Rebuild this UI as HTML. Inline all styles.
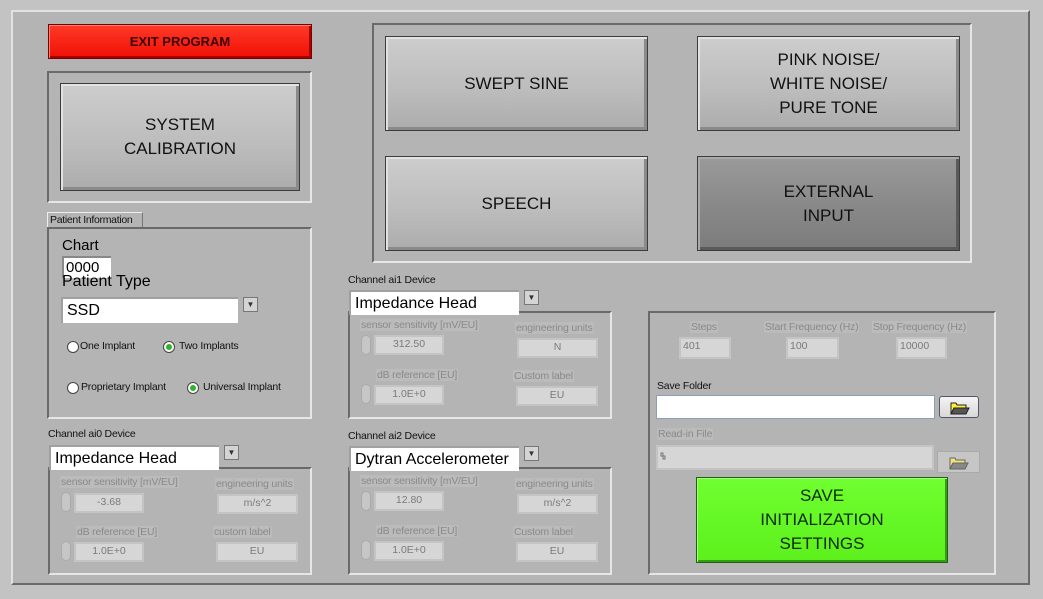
<!DOCTYPE html>
<html><head><meta charset="utf-8"><style>
*{box-sizing:border-box;margin:0;padding:0}
body{width:1043px;height:599px;background:#c3c3c3;position:relative;overflow:hidden;font-family:"Liberation Sans",sans-serif;color:#000}
.a{position:absolute}
.fr{position:absolute;border-top:2px solid #6a6a6a;border-left:2px solid #6a6a6a;border-bottom:2px solid #e6e6e6;border-right:2px solid #e6e6e6}
.btn{position:absolute;border:1px solid #3c3c3c;background:linear-gradient(#cdcdcd,#bdbdbd 55%,#acacac);box-shadow:inset 2px 2px 0 #e2e2e2,inset -3px -3px 0 #8a8a8a;display:flex;align-items:center;justify-content:center;text-align:center;font-size:17px;line-height:24px;color:#111}
.lbl{position:absolute;font-size:10.5px;color:#111;white-space:nowrap;letter-spacing:-0.2px}
.dl{position:absolute;font-size:10.5px;color:#8a8a8a;white-space:nowrap;background:#bbbbbb;padding:0 1px;letter-spacing:-0.2px}
.dbox{position:absolute;background:#d6d6d6;border:2px solid #c4c4c4;font-size:10.5px;color:#7a7a7a;text-align:center;line-height:15px}
.spin{position:absolute;width:10px;height:20px;border-radius:5px;background:#c6c6c6;border:1px solid #aaa}
.combo{position:absolute;background:#fff;font-size:16px;line-height:24px;padding-left:4px;border-top:2px solid #a0a0a0;border-left:2px solid #a0a0a0;white-space:nowrap}
.dd{position:absolute;width:15px;height:15px;background:#d4d4d4;border:1px solid #777;font-size:8px;text-align:center;line-height:13px;color:#333}
.rad{position:absolute;width:12px;height:12px;border-radius:50%;background:#fff;border:1px solid #444}
.rad.on::after{content:"";position:absolute;left:2px;top:2px;width:6px;height:6px;border-radius:50%;background:#2db52d}
</style></head><body>
<div class="a" style="left:11px;top:10px;width:1019px;height:575px;background:#b4b4b4;border-top:2px solid #e2e2e2;border-left:2px solid #e2e2e2;border-right:2px solid #6a6a6a;border-bottom:2px solid #6a6a6a"></div>

<div class="btn" style="left:48px;top:24px;width:264px;height:35px;background:linear-gradient(#ff3a28,#f01005);box-shadow:inset 1px 1px 0 #ff8070,inset -2px -2px 0 #a00;font-size:13px;font-weight:bold;color:#3a0000;border-color:#700">EXIT PROGRAM</div>

<div class="fr" style="left:47px;top:71px;width:265px;height:132px"></div>
<div class="btn" style="left:60px;top:83px;width:240px;height:108px">SYSTEM<br>CALIBRATION</div>

<div class="a" style="left:47px;top:212px;width:96px;height:15px;border:1px solid #eee;border-bottom:none;border-right-color:#777;font-size:10.5px;padding-left:2px;line-height:14px;color:#111;white-space:nowrap;letter-spacing:-0.3px;overflow:hidden">Patient Information</div>
<div class="fr" style="left:47px;top:227px;width:265px;height:192px"></div>
<div class="a" style="left:62px;top:237px;font-size:15px">Chart</div>
<div class="a" style="left:62px;top:256px;width:49px;height:22px;background:#fff;border-top:2px solid #888;border-left:2px solid #888;font-size:15px;line-height:20px;padding-left:2px">0000</div>
<div class="a" style="left:62px;top:273px;font-size:16px">Patient Type</div>
<div class="combo" style="left:61px;top:297px;width:177px;height:26px">SSD</div>
<div class="dd" style="left:243px;top:297px">▼</div>
<div class="rad" style="left:67px;top:341px"></div><div class="lbl" style="left:80px;top:340px">One Implant</div>
<div class="rad on" style="left:163px;top:341px"></div><div class="lbl" style="left:179px;top:340px">Two Implants</div>
<div class="rad" style="left:67px;top:382px"></div><div class="lbl" style="left:81px;top:381px">Proprietary Implant</div>
<div class="rad on" style="left:187px;top:382px"></div><div class="lbl" style="left:203px;top:381px">Universal Implant</div>

<div class="fr" style="left:372px;top:23px;width:600px;height:240px"></div>
<div class="btn" style="left:385px;top:36px;width:263px;height:95px">SWEPT SINE</div>
<div class="btn" style="left:697px;top:36px;width:263px;height:95px">PINK NOISE/<br>WHITE NOISE/<br>PURE TONE</div>
<div class="btn" style="left:385px;top:156px;width:263px;height:95px">SPEECH</div>
<div class="btn" style="left:697px;top:156px;width:263px;height:95px;background:linear-gradient(#9a9a9a,#888 55%,#7c7c7c);box-shadow:inset 2px 2px 0 #aaa,inset -3px -3px 0 #5a5a5a">EXTERNAL<br>INPUT</div>

<div class="lbl" style="left:48px;top:428px">Channel ai0 Device</div>
<div class="fr" style="left:48px;top:467px;width:264px;height:108px"></div>
<div class="combo" style="left:49px;top:445px;width:170px;height:25px">Impedance Head</div>
<div class="dd" style="left:224px;top:445px">▼</div>
<div class="dl" style="left:60px;top:476px">sensor sensitivity [mV/EU]</div>
<div class="spin" style="left:61px;top:492px"></div>
<div class="dbox" style="left:74px;top:493px;width:70px;height:20px">-3.68</div>
<div class="dl" style="left:215px;top:478px">engineering units</div>
<div class="dbox" style="left:217px;top:494px;width:81px;height:20px">m/s^2</div>
<div class="dl" style="left:76px;top:526px">dB reference [EU]</div>
<div class="spin" style="left:61px;top:541px"></div>
<div class="dbox" style="left:74px;top:542px;width:70px;height:20px">1.0E+0</div>
<div class="dl" style="left:213px;top:526px">custom label</div>
<div class="dbox" style="left:216px;top:542px;width:82px;height:20px">EU</div>

<div class="lbl" style="left:348px;top:274px">Channel ai1 Device</div>
<div class="fr" style="left:348px;top:311px;width:264px;height:108px"></div>
<div class="combo" style="left:349px;top:290px;width:170px;height:25px">Impedance Head</div>
<div class="dd" style="left:524px;top:290px">▼</div>
<div class="dl" style="left:360px;top:319px">sensor sensitivity [mV/EU]</div>
<div class="spin" style="left:361px;top:335px"></div>
<div class="dbox" style="left:374px;top:335px;width:70px;height:20px">312.50</div>
<div class="dl" style="left:515px;top:322px">engineering units</div>
<div class="dbox" style="left:517px;top:338px;width:81px;height:20px">N</div>
<div class="dl" style="left:376px;top:369px">dB reference [EU]</div>
<div class="spin" style="left:361px;top:384px"></div>
<div class="dbox" style="left:374px;top:385px;width:70px;height:20px">1.0E+0</div>
<div class="dl" style="left:513px;top:370px">Custom label</div>
<div class="dbox" style="left:516px;top:386px;width:82px;height:20px">EU</div>

<div class="lbl" style="left:348px;top:430px">Channel ai2 Device</div>
<div class="fr" style="left:348px;top:467px;width:264px;height:108px"></div>
<div class="combo" style="left:349px;top:446px;width:170px;height:25px">Dytran Accelerometer</div>
<div class="dd" style="left:524px;top:446px">▼</div>
<div class="dl" style="left:360px;top:475px">sensor sensitivity [mV/EU]</div>
<div class="spin" style="left:361px;top:491px"></div>
<div class="dbox" style="left:374px;top:491px;width:70px;height:20px">12.80</div>
<div class="dl" style="left:515px;top:478px">engineering units</div>
<div class="dbox" style="left:517px;top:494px;width:81px;height:20px">m/s^2</div>
<div class="dl" style="left:376px;top:525px">dB reference [EU]</div>
<div class="spin" style="left:361px;top:540px"></div>
<div class="dbox" style="left:374px;top:541px;width:70px;height:20px">1.0E+0</div>
<div class="dl" style="left:513px;top:526px">Custom label</div>
<div class="dbox" style="left:516px;top:542px;width:82px;height:20px">EU</div>

<div class="fr" style="left:648px;top:311px;width:348px;height:264px"></div>
<div class="dl" style="left:690px;top:321px">Steps</div>
<div class="dbox" style="left:679px;top:337px;width:52px;height:22px;text-align:left;padding-left:2px">401</div>
<div class="dl" style="left:764px;top:321px">Start Frequency (Hz)</div>
<div class="dbox" style="left:786px;top:337px;width:53px;height:22px;text-align:left;padding-left:2px">100</div>
<div class="dl" style="left:872px;top:321px">Stop Frequency (Hz)</div>
<div class="dbox" style="left:896px;top:337px;width:51px;height:22px;text-align:left;padding-left:2px">10000</div>
<div class="lbl" style="left:657px;top:380px">Save Folder</div>
<div class="a" style="left:656px;top:395px;width:279px;height:24px;background:#fff;border:1px solid #8aa0b8"></div>
<div class="a" style="left:939px;top:396px;width:40px;height:22px;background:linear-gradient(#f4f4f4,#d8d8d8);border:1px solid #556;border-radius:3px"><svg width="38" height="20"><path d="M11 6h5l1 2h9v3H14l-3 6z" fill="#ffef3a" stroke="#222"/><path d="M11 17l3-6h15l-3 6z" fill="#555" stroke="#222"/></svg></div>
<div class="dl" style="left:657px;top:428px">Read-in File</div>
<div class="a" style="left:656px;top:445px;width:278px;height:25px;background:#d6d6d6;border:2px solid #c4c4c4"><svg width="10" height="20"><path d="M3 6h2v3h2v3H5v-3H3z" fill="none" stroke="#777" stroke-width="1"/></svg></div>
<div class="a" style="left:937px;top:451px;width:43px;height:22px;background:#c6c6c6;border:1px solid #aaa"><svg width="40" height="20"><path d="M12 6h5l1 2h9v3H15l-3 6z" fill="#eee07a" stroke="#666"/><path d="M12 17l3-6h15l-3 6z" fill="#888" stroke="#666"/></svg></div>
<div class="btn" style="left:696px;top:477px;width:252px;height:86px;background:linear-gradient(#70ff30,#5cf01c);box-shadow:inset 1px 1px 0 #a0ff80,inset -2px -2px 0 #30a010;border-color:#2a5a1a;color:#0a2a05">SAVE<br>INITIALIZATION<br>SETTINGS</div>
</body></html>
